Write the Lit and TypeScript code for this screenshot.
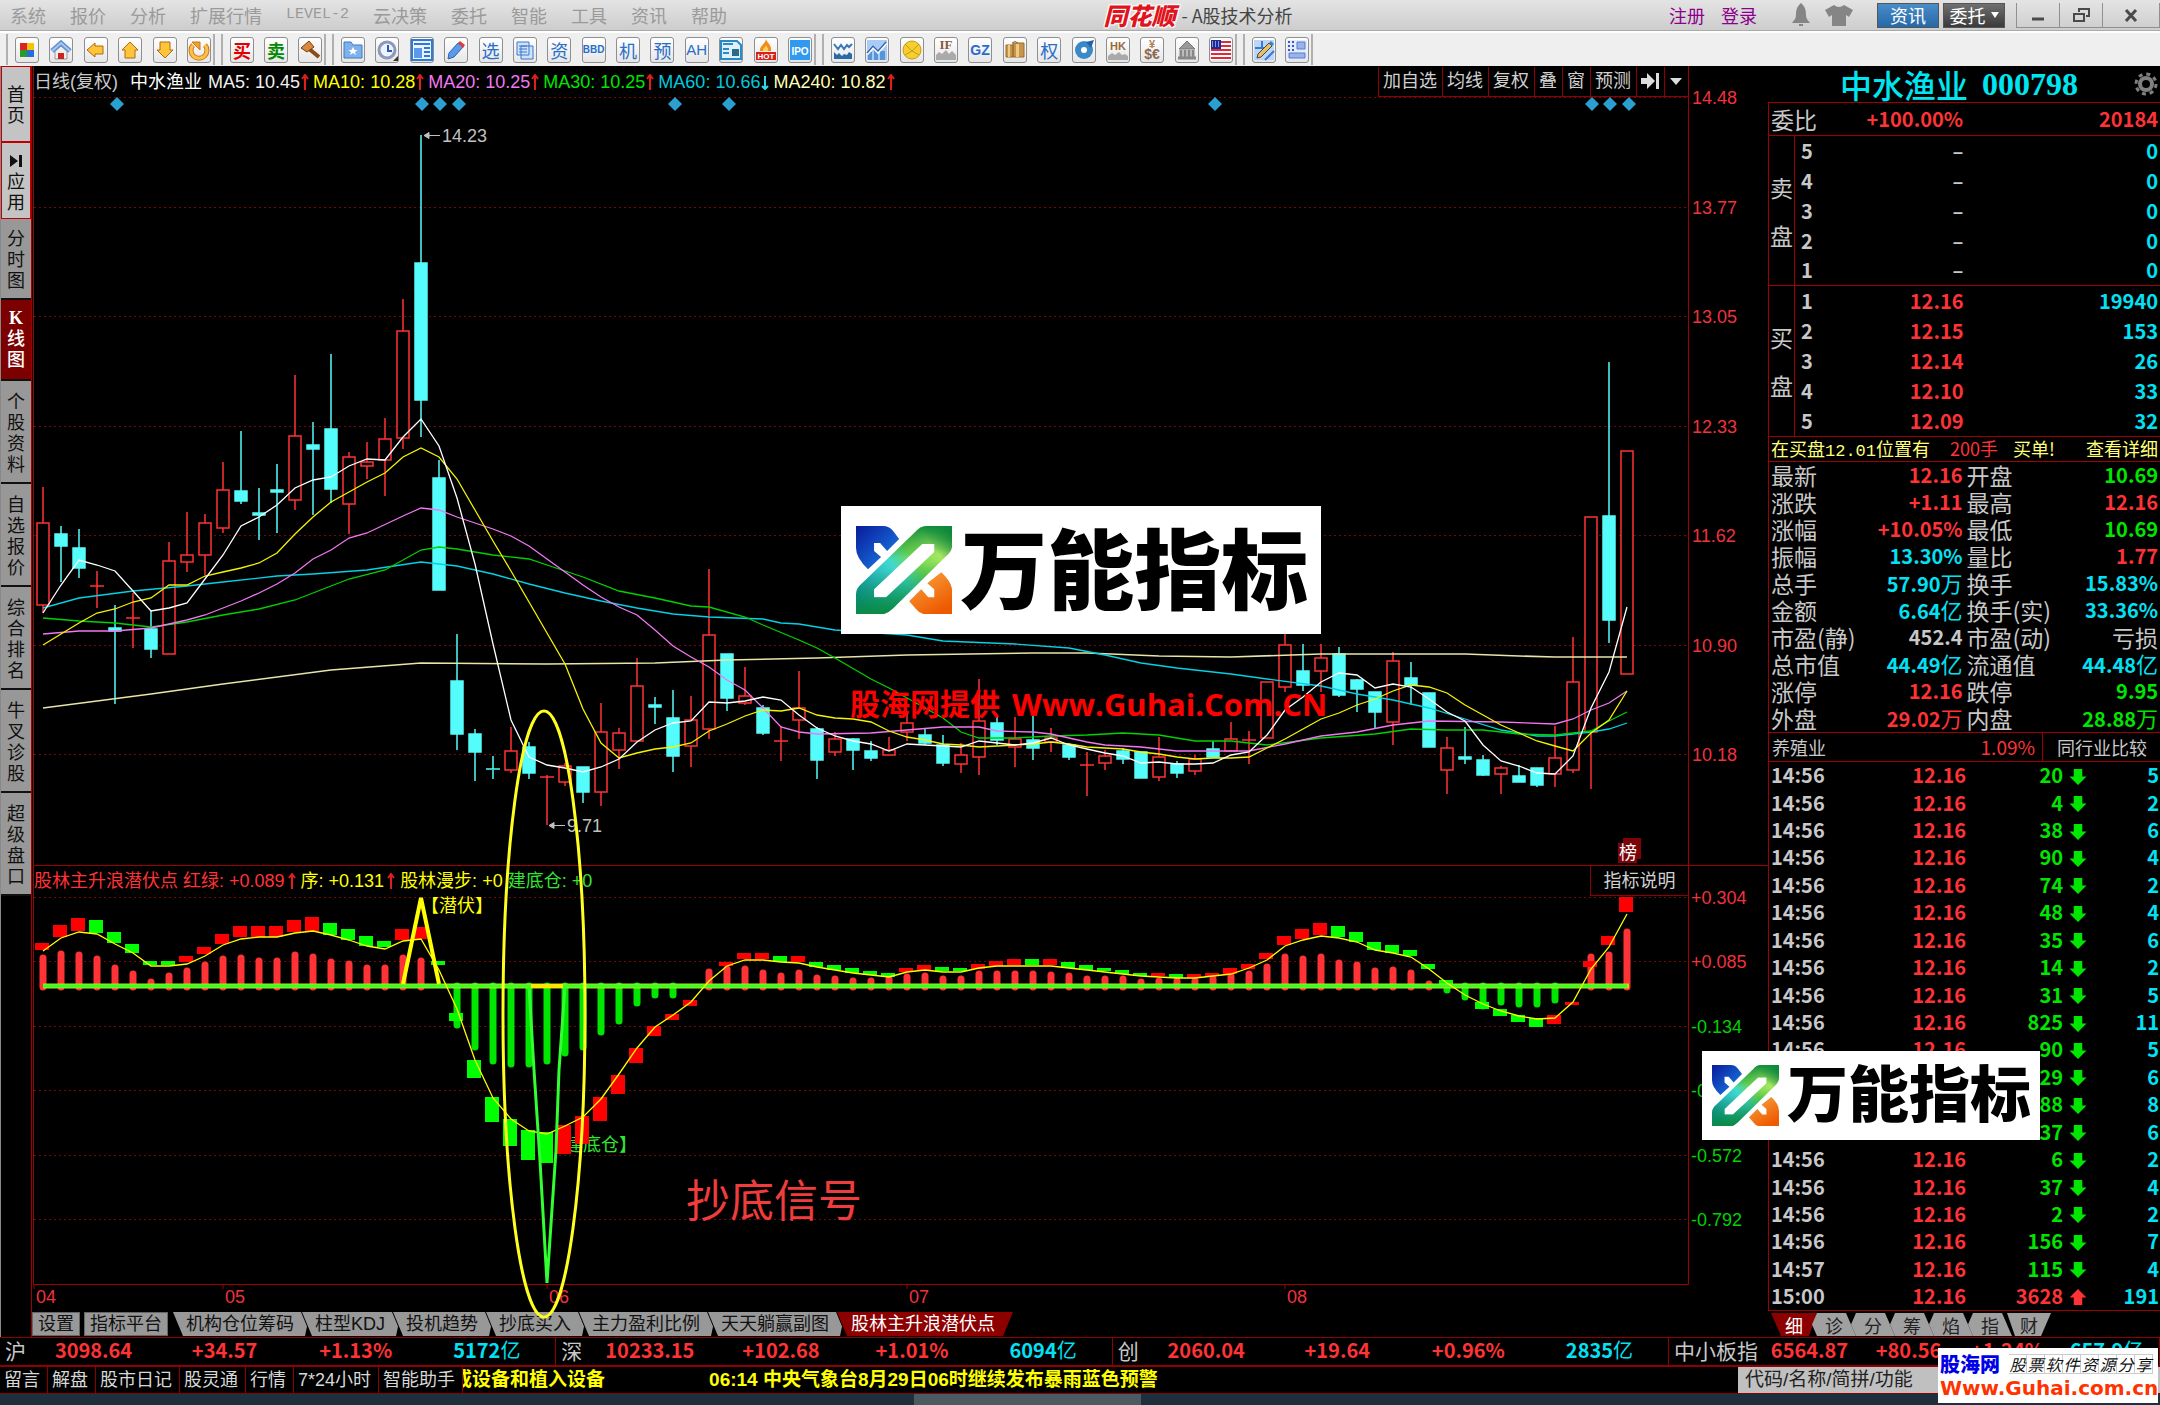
import { LitElement, html, svg, css } from "lit";
import { customElement } from "lit/decorators.js";
import { classMap } from "lit/directives/class-map.js";

type Point = [number, number];
// [direction, high, body top, body bottom, low]; "r" rises, "c" falls
type Candle = ["r" | "c", number, number, number, number];

const STEP = 18;
const FIRST_X = 43;
const xAt = (i: number) => FIRST_X + i * STEP;
const path = (pts: Point[]) => pts.map(([i, y]) => `${xAt(i)},${y}`).join(" ");
const dense = (ys: number[]): Point[] => ys.map((y, i) => [i, y]);

const CANDLES: Candle[] = [
  ["r", 487, 523, 605, 613], ["c", 526, 534, 546, 582], ["c", 529, 548, 568, 578], ["r", 571, 586, 586, 608],
  ["c", 605, 628, 631, 704], ["r", 593, 618, 618, 648], ["c", 610, 629, 649, 658], ["r", 542, 561, 654, 654],
  ["r", 512, 555, 562, 572], ["r", 514, 523, 555, 575], ["r", 462, 490, 528, 533], ["c", 431, 491, 501, 504],
  ["c", 488, 513, 515, 540], ["c", 464, 490, 492, 533], ["r", 375, 436, 500, 510], ["c", 422, 445, 449, 515],
  ["c", 354, 429, 489, 503], ["r", 452, 457, 504, 534], ["r", 442, 462, 466, 479], ["r", 418, 439, 460, 496],
  ["r", 299, 331, 438, 449], ["c", 135, 263, 400, 437], ["c", 460, 478, 590, 590], ["c", 634, 681, 734, 750],
  ["c", 729, 734, 752, 781], ["c", 756, 769, 770, 779], ["r", 727, 751, 770, 773], ["c", 742, 747, 773, 779],
  ["r", 775, 777, 777, 825], ["r", 763, 766, 782, 786], ["c", 767, 767, 792, 803], ["r", 703, 732, 792, 806],
  ["r", 728, 733, 750, 769], ["r", 658, 686, 741, 741], ["c", 697, 705, 707, 724], ["c", 690, 718, 756, 772],
  ["r", 696, 720, 746, 767], ["r", 569, 635, 729, 739], ["c", 654, 654, 698, 711], ["r", 667, 696, 703, 705],
  ["c", 705, 708, 733, 735], ["r", 726, 741, 741, 761], ["r", 671, 708, 720, 739], ["c", 727, 729, 760, 779],
  ["r", 732, 739, 752, 756], ["c", 738, 739, 750, 770], ["c", 741, 751, 758, 761], ["r", 737, 750, 755, 755],
  ["r", 713, 723, 732, 741], ["c", 729, 735, 743, 745], ["c", 735, 745, 763, 766], ["r", 743, 755, 764, 773],
  ["r", 679, 721, 757, 775], ["c", 717, 723, 740, 745], ["r", 717, 739, 747, 767], ["c", 713, 740, 748, 760],
  ["r", 728, 738, 742, 752], ["c", 743, 745, 757, 760], ["r", 752, 765, 765, 796], ["r", 750, 756, 763, 770],
  ["c", 748, 751, 759, 764], ["c", 752, 752, 778, 778], ["r", 737, 757, 777, 781], ["c", 761, 764, 773, 778],
  ["r", 755, 759, 771, 775], ["c", 741, 749, 757, 758], ["r", 722, 739, 751, 751], ["r", 731, 740, 740, 764],
  ["r", 682, 682, 738, 738], ["r", 625, 645, 687, 692], ["c", 644, 671, 685, 691], ["r", 644, 658, 671, 692],
  ["c", 647, 654, 695, 697], ["c", 679, 680, 689, 712], ["c", 692, 692, 712, 728], ["r", 652, 661, 722, 745],
  ["c", 662, 678, 685, 705], ["c", 693, 693, 747, 747], ["r", 737, 748, 770, 794], ["c", 727, 757, 759, 764],
  ["c", 755, 760, 775, 776], ["r", 766, 768, 774, 794], ["c", 765, 776, 782, 782], ["c", 768, 768, 785, 787],
  ["r", 726, 758, 774, 787], ["r", 637, 682, 770, 773], ["r", 517, 517, 732, 789], ["c", 362, 516, 620, 643],
  ["r", 451, 451, 674, 674],
];

const MA5 = dense([
  613, 585, 560, 565, 571, 591, 611, 608, 603, 579, 555, 526, 517, 505, 488, 480, 477, 466, 459, 460, 437, 419,
  446, 498, 564, 644, 720, 757, 765, 768, 772, 767, 759, 742, 730, 723, 721, 702, 703, 701, 697, 700, 715, 728,
  736, 741, 744, 751, 744, 745, 746, 747, 741, 743, 745, 743, 738, 745, 749, 753, 756, 763, 762, 764, 764, 763,
  755, 752, 735, 710, 697, 682, 673, 675, 688, 684, 687, 699, 712, 721, 745, 761, 766, 773, 774, 756, 708, 672, 607,
]);
const MA10 = dense([
  645, 634, 623, 613, 609, 602, 598, 585, 585, 576, 572, 568, 563, 553, 534, 517, 502, 492, 482, 473, 457, 448,
  457, 479, 510, 541, 571, 602, 633, 664, 709, 743, 758, 753, 749, 747, 743, 731, 724, 716, 710, 711, 708, 715,
  718, 719, 722, 731, 737, 740, 744, 745, 747, 746, 745, 744, 742, 744, 747, 748, 749, 752, 754, 757, 759, 758,
  758, 757, 748, 739, 729, 719, 713, 705, 699, 691, 685, 687, 693, 705, 715, 725, 733, 741, 746, 751, 733, 720, 691,
]);
const MA20: Point[] = [
  [0, 634], [2, 631], [4, 631], [6, 628], [8, 620], [9, 615], [10, 608], [11, 601], [12, 593], [13, 584], [14, 573],
  [15, 559], [16, 550], [17, 538], [18, 533], [20, 516], [21, 508], [22, 510], [23, 517], [25, 529], [26, 536],
  [27, 546], [28, 559], [30, 585], [31, 597], [32, 607], [33, 615], [34, 630], [35, 646], [36, 657], [37, 667],
  [38, 680], [39, 690], [40, 708], [41, 727], [42, 732], [43, 734], [46, 733], [48, 730], [50, 727], [52, 727],
  [53, 731], [55, 732], [56, 734], [58, 742], [59, 745], [61, 747], [63, 751], [67, 751], [69, 744], [71, 736],
  [73, 732], [75, 725], [77, 721], [81, 722], [84, 724], [85, 719], [86, 710], [87, 703], [88, 691],
];
const MA30: Point[] = [
  [0, 618], [2, 621], [4, 623], [6, 627], [8, 622], [10, 615], [12, 609], [14, 600], [16, 586], [17, 579], [19, 570],
  [21, 550], [22, 547], [23, 549], [25, 555], [27, 559], [28, 565], [30, 577], [32, 591], [34, 598], [36, 606],
  [37, 607], [39, 617], [40, 625], [42, 640], [43, 648], [44, 658], [46, 679], [47, 688], [48, 698], [50, 718],
  [51, 732], [52, 738], [54, 738], [56, 736], [58, 735], [60, 733], [62, 735], [64, 741], [66, 741], [68, 745],
  [71, 738], [74, 734], [76, 729], [78, 730], [80, 730], [82, 734], [84, 735], [86, 731], [87, 721], [88, 712],
];
const MA60: Point[] = [
  [0, 608], [2, 598], [5, 591], [8, 586], [10, 582], [13, 576], [15, 574], [18, 570], [21, 562], [23, 566], [25, 574],
  [27, 584], [29, 593], [31, 601], [33, 608], [35, 614], [37, 617], [40, 619], [41, 623], [42, 624], [44, 630],
  [48, 635], [50, 641], [54, 644], [57, 648], [59, 655], [61, 663], [63, 668], [66, 674], [68, 679], [71, 686],
  [73, 694], [75, 700], [77, 708], [79, 719], [81, 730], [83, 736], [84, 736], [86, 732], [87, 729], [88, 723],
];
const MA240: Point[] = [
  [0, 708], [6, 694], [10, 684], [16, 670], [21, 663], [28, 664], [34, 663], [38, 660], [43, 658], [48, 655],
  [55, 653], [58, 653], [62, 656], [66, 657], [71, 654], [79, 654], [82, 656], [84, 657], [88, 657],
];

// End of each momentum bar, drawn from the zero line; 0 means no bar.
const BARS = [
  955, 951, 952, 956, 965, 971, 979, 973, 968, 962, 956, 955, 958, 958, 952, 954, 959, 961, 965, 965, 955, 958,
  0, 1028, 1050, 1064, 1067, 1067, 1064, 1056, 1050, 1035, 1024, 1006, 998, 998, 0, 969, 966, 966, 970, 973, 970,
  975, 976, 978, 978, 976, 974, 973, 976, 976, 971, 971, 971, 971, 972, 973, 976, 976, 976, 979, 978, 978, 978,
  976, 973, 971, 964, 954, 956, 954, 960, 962, 968, 967, 970, 981, 993, 1000, 1009, 1005, 1007, 1007, 1003, 0,
  954, 952, 929,
];
type Square = [number, "R" | "G", number, number];
const SQUARES: Square[] = [
  [0, "R", 943, 950], [1, "R", 925, 937], [2, "R", 918, 931], [3, "G", 920, 933], [4, "G", 932, 943],
  [5, "G", 944, 953], [6, "G", 961, 965], [7, "G", 961, 965], [8, "R", 956, 962], [9, "R", 947, 954],
  [10, "R", 934, 944], [11, "R", 926, 937], [12, "R", 926, 937], [13, "R", 926, 937], [14, "R", 920, 932],
  [15, "R", 917, 931], [16, "G", 923, 935], [17, "G", 929, 940], [18, "G", 936, 946], [19, "G", 941, 947],
  [20, "R", 929, 940], [21, "R", 927, 939], [22, "G", 961, 965], [23, "G", 1013, 1021], [24, "G", 1060, 1078],
  [25, "G", 1097, 1122], [26, "G", 1119, 1146], [27, "G", 1130, 1160], [28, "G", 1132, 1163],
  [29, "R", 1125, 1154], [30, "R", 1116, 1144], [31, "R", 1097, 1121], [32, "R", 1075, 1094],
  [33, "R", 1048, 1063], [34, "R", 1026, 1036], [35, "R", 1014, 1020], [36, "R", 1000, 1006],
  [38, "R", 962, 966], [39, "R", 953, 959], [40, "R", 953, 959], [41, "G", 956, 962], [42, "R", 956, 962],
  [43, "G", 962, 967], [44, "G", 965, 970], [45, "G", 968, 973], [46, "G", 971, 975], [47, "G", 973, 977],
  [48, "R", 968, 972], [49, "R", 965, 970], [50, "G", 967, 971], [51, "G", 968, 971], [52, "R", 964, 969],
  [53, "R", 961, 966], [54, "R", 959, 965], [55, "G", 959, 965], [56, "R", 959, 965], [57, "G", 962, 968],
  [58, "G", 965, 970], [59, "G", 968, 971], [60, "G", 970, 974], [61, "G", 973, 976], [62, "R", 973, 976],
  [63, "G", 974, 978], [64, "R", 974, 978], [65, "R", 973, 976], [66, "R", 968, 974], [67, "R", 964, 969],
  [68, "R", 953, 959], [69, "R", 936, 945], [70, "R", 929, 939], [71, "R", 923, 935], [72, "G", 926, 937],
  [73, "G", 932, 942], [74, "G", 942, 950], [75, "G", 945, 953], [76, "G", 950, 956], [77, "G", 964, 969],
  [78, "G", 980, 984], [80, "G", 1002, 1009], [81, "G", 1009, 1016], [82, "G", 1015, 1022],
  [83, "G", 1018, 1027], [84, "R", 1015, 1024], [85, "R", 1002, 1005], [86, "R", 961, 967],
  [87, "R", 936, 945], [88, "R", 897, 912],
];
const ORDER_LINE = dense([
  951, 938, 932, 934, 944, 953, 966, 966, 964, 956, 945, 939, 937, 937, 933, 931, 935, 940, 946, 949, 941, 939,
  970, 1009, 1060, 1098, 1119, 1131, 1134, 1126, 1117, 1099, 1074, 1048, 1027, 1015, 1002, 981, 966, 960, 960,
  962, 963, 967, 970, 973, 975, 977, 972, 970, 972, 972, 968, 966, 966, 966, 966, 968, 970, 972, 974, 976, 977,
  978, 978, 976, 974, 968, 960, 946, 940, 936, 938, 942, 950, 953, 957, 969, 983, 995, 1004, 1011, 1016, 1019,
  1018, 1002, 969, 947, 914,
]);

@customElement("candle-chart")
export class CandleChart extends LitElement {
  static styles = css`
    :host { display: block; }
    .plot { display: block; width: 100%; height: auto; overflow: visible; }
    .grid { stroke: #740808; stroke-width: 1; stroke-dasharray: 2 3; }
    .frame { stroke: #a00000; stroke-width: 1; fill: none; }
    .axis { font: 18px "Liberation Sans", sans-serif; fill: #f0323c; }
    .rise { stroke: #ff3236; fill: #000; }
    .fall { stroke: #54fcfc; fill: #54fcfc; }
    .wick { fill: none; stroke-width: 1.5; }
    .body { stroke-width: 1.5; }
    .line { fill: none; stroke-width: 1.3; }
    .ma5 { stroke: #fff; }
    .ma10 { stroke: #f4f400; }
    .ma20 { stroke: #f078f0; }
    .ma30 { stroke: #00d200; }
    .ma60 { stroke: #02d2e4; }
    .ma240 { stroke: #e6e6a8; stroke-width: 1.6; }
    .note { font: 18px "Liberation Sans", sans-serif; fill: #c0c0c0; }
    .arrow { stroke: #c0c0c0; fill: #c0c0c0; }
    .diamond { fill: #2a9fd0; }
    .badge { fill: #7a0408; }
    .badge-text { font: 18px "Noto Sans CJK SC", sans-serif; fill: #fff; }
  `;

  private candle([dir, high, top, bottom, low]: Candle, i: number) {
    const x = xAt(i);
    const kind = dir === "r" ? "rise" : "fall";
    const flat = bottom - top < 2;
    return svg`<g class=${kind}>
      <path class="wick" d="M${x} ${high}V${top}M${x} ${bottom}V${low}"></path>
      ${flat
        ? svg`<path class="wick" d="M${x - 7} ${top}H${x + 7}"></path>`
        : svg`<rect class="body" x=${x - 6} y=${top} width="12" height=${bottom - top}></rect>`}
    </g>`;
  }

  render() {
    const prices = ["14.48", "13.77", "13.05", "12.33", "11.62", "10.90", "10.18"];
    const rows = [97, 207, 316, 426, 535, 645, 754];
    const marks = [117, 422, 440, 459, 675, 729, 1215, 1592, 1610, 1629];
    return html`<svg class="plot" viewBox="32 97 1736 769" role="img" aria-label="日线 K线图">
      ${rows.map((y) => svg`<line class="grid" x1="34" x2="1688" y1=${y + 0.5} y2=${y + 0.5}></line>`)}
      <path class="frame" d="M33.5 66V866M1688.5 66V866M33 865.5H1768"></path>
      ${rows.map((y, i) => svg`<text class="axis" x="1692" y=${y + 7}>${prices[i]}</text>`)}
      ${marks.map((x) => svg`<path class="diamond" d="M${x} 97l7 7l-7 7l-7-7z"></path>`)}
      ${CANDLES.map((c, i) => this.candle(c, i))}
      <polyline class="line ma240" points=${path(MA240)}></polyline>
      <polyline class="line ma60" points=${path(MA60)}></polyline>
      <polyline class="line ma30" points=${path(MA30)}></polyline>
      <polyline class="line ma20" points=${path(MA20)}></polyline>
      <polyline class="line ma10" points=${path(MA10)}></polyline>
      <polyline class="line ma5" points=${path(MA5)}></polyline>
      <path class="arrow" d="M440 135.500H424l5-3v6l-5-3"></path>
      <text class="note" x="442" y="142">14.23</text>
      <path class="arrow" d="M565 825.500H549l5-3v6l-5-3"></path>
      <text class="note" x="567" y="832">9.71</text>
      <path class="badge" d="M1618 843h5v-5h18v21h-4v4h-19z"></path>
      <text class="badge-text" x="1619" y="859">榜</text>
    </svg>`;
  }
}

@customElement("indicator-chart")
export class IndicatorChart extends LitElement {
  static styles = css`
    :host { display: block; }
    .plot { display: block; width: 100%; height: auto; overflow: visible; }
    .grid { stroke: #740808; stroke-width: 1; stroke-dasharray: 2 3; }
    .frame { stroke: #a00000; stroke-width: 1; fill: none; }
    .axis { font: 18px "Liberation Sans", sans-serif; }
    .up { fill: #f0323c; }
    .down { fill: #00d200; }
    .bar { stroke-width: 7; stroke-linecap: round; }
    .bar-up { stroke: #ff3236; }
    .bar-down { stroke: #00e600; }
    .R { fill: #ff0000; }
    .G { fill: #00ff00; }
    .order { fill: none; stroke: #ffff00; stroke-width: 1.3; }
    .peak { fill: none; stroke: #ffff00; stroke-width: 4; stroke-linejoin: bevel; }
    .zero { stroke: #b4e600; stroke-width: 5; }
    .zero-core { stroke: #32ff32; stroke-width: 3; }
    .zero-hot { stroke: #ffe600; stroke-width: 4; }
    .spike { fill: none; stroke: #32ff32; stroke-width: 3; stroke-linejoin: bevel; }
    .tag { font: 18px "Noto Sans CJK SC", sans-serif; }
    .tag-yellow { fill: #ffff00; }
    .tag-green { fill: #32e632; }
    .remark { font: 44px "Noto Sans CJK SC", sans-serif; fill: #f03c3c; }
  `;

  render() {
    const rows = [897, 961, 1026, 1090, 1155, 1219];
    const values = ["+0.304", "+0.085", "-0.134", "-0.353", "-0.572", "-0.792"];
    const months: [string, number][] = [["04", 34], ["05", 223], ["06", 547], ["07", 907], ["08", 1285]];
    return html`<svg class="plot" viewBox="32 896 1736 416" role="img" aria-label="股林主升浪潜伏点">
      ${rows.map((y) => svg`<line class="grid" x1="34" x2="1688" y1=${y + 0.5} y2=${y + 0.5}></line>`)}
      <path class="frame" d="M33.5 866V1284.500H1688.500V866"></path>
      ${rows.map((y, i) => svg`<text class=${i < 2 ? "axis up" : "axis down"} x="1691" y=${y + 7}>${values[i]}</text>`)}
      ${months.map(([m, x]) => svg`<path class="frame" d="M${x} 1284v5"></path>
        <text class="axis up" x=${x + 2} y="1303">${m}</text>`)}
      <text class="tag tag-yellow" x="421" y="912">【潜伏】</text>
      <text class="tag tag-green" x="547" y="1151">【建底仓】</text>
      <text class="remark" x="686" y="1217">抄底信号</text>
      ${BARS.map((y, i) => y === 0 ? "" : y < 985
        ? svg`<path class="bar bar-up" d="M${xAt(i)} ${y + 3}V987"></path>`
        : svg`<path class="bar bar-down" d="M${xAt(i)} 986V${y - 3}"></path>`)}
      ${SQUARES.map(([i, c, top, bottom]) =>
        svg`<rect class=${c} x=${xAt(i) - 8} y=${top} width="14" height=${bottom - top}></rect>`)}
      <path class="zero" d="M${xAt(0)} 986H${xAt(88) + 2}"></path>
      <path class="zero-core" d="M${xAt(0)} 986H${xAt(88)}"></path>
      <path class="zero-hot" d="M531 986H563"></path>
      <polyline class="order" points=${path(ORDER_LINE)}></polyline>
      <path class="peak" d="M403 984L421 898L439 984"></path>
      <path class="spike" d="M529 986L534 1070L540 1161L547 1283L556 1150L559 1070L565 986"></path>
    </svg>`;
  }
}

@customElement("brand-stamp")
export class BrandStamp extends LitElement {
  static styles = css`
    :host { display: flex; align-items: center; background: #fff; box-sizing: border-box; padding: 0 12px 0 15px; }
    .mark { height: 69%; width: auto; flex: none; }
    .name { flex: none; margin-left: 8px; padding-bottom: 10px; color: #000; font-family: "Noto Sans CJK SC", sans-serif; font-weight: 900; line-height: 1; white-space: nowrap; }
  `;
  render() {
    return html`<svg class="mark" viewBox="0 0 96 88" aria-hidden="true">
        <defs>
          <linearGradient id="blue" x1="0" y1="0" x2="1" y2="1"><stop offset="0" stop-color="#0a1a9a"></stop><stop offset="1" stop-color="#1a86ee"></stop></linearGradient>
          <linearGradient id="orange" x1="0" y1="0" x2="0.6" y2="1"><stop offset="0" stop-color="#f9a844"></stop><stop offset="1" stop-color="#ee5a00"></stop></linearGradient>
          <linearGradient id="teal" x1="0" y1="0.8" x2="1" y2="0.1"><stop offset="0" stop-color="#0a8f9f"></stop><stop offset="0.42" stop-color="#3fd9d0"></stop><stop offset="0.6" stop-color="#6fd650"></stop><stop offset="0.8" stop-color="#a6e860"></stop><stop offset="1" stop-color="#16863a"></stop></linearGradient>
          <linearGradient id="low" x1="0.3" y1="0.5" x2="0.4" y2="1"><stop offset="0" stop-color="#0a8a3a" stop-opacity="0"></stop><stop offset="1" stop-color="#0a8a3a"></stop></linearGradient>
          <linearGradient id="high" x1="0.6" y1="0.5" x2="0.55" y2="0"><stop offset="0.3" stop-color="#0a8a3a" stop-opacity="0"></stop><stop offset="1" stop-color="#0a8a3a"></stop></linearGradient>
        </defs>
        <path fill="url(#blue)" d="M0 0H27Q33 0 37 5L43 13L31 25L24 17H18V25L25 31L12 43Q0 32 0 22z"></path>
        <path fill="url(#orange)" d="M96 88H70Q64 88 60 83L53 75L65 63L72 71H78V63L71 57L85 46Q96 56 96 66z"></path>
        ${["teal", "low", "high"].map((g) => svg`<path fill="url(#${g})" fill-rule="evenodd" d="M96 0H70Q64 0 59 6L6 57Q0 62 0 68V88H25Q31 88 37 82L90 30Q96 25 96 18zM78 18V26L30 71H18V63L66 18z"></path>`)}
      </svg><span class="name">万能指标</span>`;
  }
}

const frame = (body: unknown) => svg`${body}`;
const ICONS: Record<string, unknown> = {
  grid: frame(svg`<path fill="#d22" d="M4 4h7v7H4z"/><path fill="#f5c400" d="M11 4h7v7h-7z"/><path fill="#2a9a2a" d="M4 11h7v7H4z"/><path fill="#2a6ae0" d="M11 11h7v7h-7z"/>`),
  home: frame(svg`<path fill="#eee" stroke="#999" d="M5 12v8h12v-8l-6-5z"/><path fill="#c22" d="M8 14h6v6H8z"/><path fill="none" stroke="#5f8fd0" stroke-width="5" d="M2 12l9-8 9 8"/><path fill="none" stroke="#a9c8f0" stroke-width="2" d="M2 12l9-8 9 8"/>`),
  left: frame(svg`<path fill="#ffc53a" stroke="#b06a10" d="M2 11l8-7v3h8v8h-8v3z"/>`),
  up: frame(svg`<path fill="#ffc53a" stroke="#b06a10" d="M11 3l8 8h-3v8H6v-8H3z"/>`),
  down: frame(svg`<path fill="#ffc53a" stroke="#b06a10" d="M11 19l8-8h-3V3H6v8H3z"/>`),
  refresh: frame(svg`<path fill="none" stroke="#c87a1a" stroke-width="5" d="M5 6a8 8 0 1 0 12 0"/><path fill="none" stroke="#ffc04a" stroke-width="3" d="M5 6a8 8 0 1 0 12 0"/><path fill="#f0a030" stroke="#c87a1a" d="M4 3h8v8z"/>`),
  hammer: frame(svg`<path stroke="#8a4a1a" stroke-width="4" d="M9 9l11 9"/><path fill="#d88a3a" stroke="#7a3a10" d="M2 9l8-7 5 6-7 5z"/>`),
  folder: frame(svg`<path fill="#7fb2ea" stroke="#3a78c8" d="M2 3h7l2 3h9v13H2z"/><path fill="#fff" d="M11 8l1.500 3h3l-2.500 2 1 3-3-2-3 2 1-3-2.500-2h3z"/>`),
  clock: frame(svg`<circle cx="11" cy="11" r="8" fill="#eef4ff" stroke="#8a9ab8" stroke-width="3"/><path fill="none" stroke="#2a5ac0" stroke-width="2" d="M12 6v6h4"/><path fill="#333" d="M22 17v5h-5z"/>`),
  news: frame(svg`<path fill="#eaf3ff" stroke="#2f7ad8" stroke-width="2" d="M1 1h20v20H1z"/><path stroke="#2f7ad8" stroke-width="2" d="M3 5h16M13 9h6M13 13h6M13 17h6"/><path fill="#5a9ae8" d="M3 9h8v10H3z"/>`),
  pencil: frame(svg`<path fill="#5a9ae8" stroke="#2a62b8" d="M4 14L13 4l5 4L9 18l-6 2z"/><path fill="#e03a3a" d="M13 4l2-2 5 4-2 3z"/>`),
  docs: frame(svg`<path fill="#cfe2fa" stroke="#3a78c8" d="M7 7h12v13H7zM3 3h12v13H3z"/><path stroke="#3a78c8" d="M5 7h8M5 10h8M5 13h8"/>`),
  page: frame(svg`<path fill="#dff0fb" stroke="#2a8ac8" stroke-width="2" d="M1 2h16l4 4v14H1z"/><path stroke="#2a8ac8" stroke-width="2" d="M3 5h10M3 10h6M3 14h6"/><path fill="#2a6a8a" d="M12 10h7v7h-7z"/>`),
  hot: frame(svg`<path fill="#f58a1e" d="M11 0c1 4 6 6 5 12H5c-1-5 5-6 6-12z"/><path fill="#ffd24a" d="M11 6c1 3 3 3 2 6H8c0-3 2-3 3-6z"/><path fill="#d8201c" d="M1 13h20v8H1z"/><text x="11" y="20" text-anchor="middle" font-family="Liberation Sans" font-weight="700" font-size="8" fill="#fff">HOT</text>`),
  ipo: frame(svg`<path fill="#2f9af0" d="M1 1h20v20H1z"/><text x="11" y="16" text-anchor="middle" font-family="Liberation Sans" font-weight="700" font-size="10" fill="#fff">IPO</text>`),
  wave: frame(svg`<path fill="none" stroke="#3a78b8" stroke-width="2" d="M2 5l4 5 3-4 3 4 3-4 2 2 3-3"/><path fill="#2a6aa8" d="M2 13l3 3 2-2 3 3 2-2 3 1 2-3 3 2v5H2z"/>`),
  trend: frame(svg`<path fill="#a8ccf4" d="M1 1h20v20H1z"/><path fill="#5a94d8" d="M2 13h4v8H2zM8 11h4v10H8zM14 12h5v9h-5z"/><path fill="none" stroke="#fff" stroke-width="3" d="M1 15l6-7 5 5 8-9"/><path fill="none" stroke="#2f62b0" stroke-width="1.500" d="M1 14l6-7 5 5 8-9"/>`),
  ball: frame(svg`<circle cx="11" cy="11" r="9" fill="#f5cf30" stroke="#c89a10"/><path fill="none" stroke="#c89a10" d="M4 5q5 7 14 11M18 5q-5 7-14 11"/>`),
  futures: frame(svg`<path fill="#aaa" d="M1 21v-5l3-3 3 2 4-4 3 4 3-3 4 4v5z"/><text x="11" y="10" text-anchor="middle" font-family="Liberation Serif" font-weight="700" font-size="13" fill="#8a5a3a">IF</text>`),
  gz: frame(svg`<text x="11" y="16" text-anchor="middle" font-family="Liberation Sans" font-weight="700" font-size="14" fill="#2a6ad0">GZ</text>`),
  chest: frame(svg`<path fill="#c8964a" stroke="#9a6a2a" d="M2 6h7v12H2zM9 4h11v14H9z"/><path fill="#eccb8a" d="M4 6h2v12H4zM12 5h3v13h-3z"/><path fill="none" stroke="#8a6a3a" d="M8 4q3-3 6 0"/>`),
  disc: frame(svg`<circle cx="11" cy="11" r="9" fill="#3a8ac8"/><path fill="#1f62a8" d="M13 3l8-2-3 8z"/><circle cx="11" cy="11" r="3" fill="#fff"/>`),
  hk: frame(svg`<path fill="#aaa" d="M1 21v-4l4-3 3 2 4-3 3 3 3-1 3 2v4z"/><text x="11" y="11" text-anchor="middle" font-family="Liberation Sans" font-weight="700" font-size="11" fill="#9a6a3a">HK</text>`),
  money: frame(svg`<text x="11" y="9" text-anchor="middle" font-family="Liberation Sans" font-weight="700" font-size="11" fill="#b08050">¥</text><text x="11" y="20" text-anchor="middle" font-family="Liberation Sans" font-weight="700" font-size="14" fill="#8a6a50">$€</text>`),
  bank: frame(svg`<path fill="#999" stroke="#777" d="M3 10l8-8 8 8z"/><path stroke="#888" stroke-width="3" d="M5 11v7M9 11v7M13 11v7M17 11v7M2 19h18"/>`),
  flag: frame(svg`<path fill="#fff" d="M1 1h20v20H1z"/><path stroke="#e02a3a" stroke-width="2" d="M1 3h20M1 7h20M1 11h20M1 15h20M1 19h20"/><path fill="#1a2a9a" d="M1 1h10v9H1z"/><path stroke="#fff" stroke-dasharray="1 2" d="M2 3h8M2 5h8M2 7h8"/>`),
  draw: frame(svg`<path fill="#bcd6f6" d="M1 1h20v20H1z"/><path fill="none" stroke="#3a78d8" stroke-width="2" d="M2 9h9M9 2v8M12 21l9-9"/><path fill="#e8c060" stroke="#444" d="M5 15L16 4l3 3L8 18l-4 1z"/><path fill="#2a8ad8" d="M16 4l2-2 3 3-2 2z"/>`),
  board: frame(svg`<path fill="#e4ecfb" d="M1 1h20v20H1z"/><path stroke="#3a5ac0" stroke-width="2" stroke-dasharray="2 2" d="M2 3h7M2 7h7M2 11h7"/><path fill="#9ab4e8" stroke="#5a7ad0" d="M11 3h8v7h-8zM3 14h16v5H3z"/>`),
};

type Tool = { icon?: string; text?: string; tone?: string; label: string };
const icon = (name: string, label: string): Tool => ({ icon: name, label });
const word = (text: string, tone = "blue"): Tool => ({ text, tone, label: text });
const TOOL_GROUPS: { size: string; tools: Tool[] }[] = [
  { size: "g6", tools: [icon("grid", "首页"), icon("home", "主页"), icon("left", "后退"), icon("up", "上翻"), icon("down", "下翻"), icon("refresh", "刷新")] },
  { size: "g3", tools: [word("买", "red"), word("卖", "green"), icon("hammer", "拍卖")] },
  { size: "g14", tools: [icon("folder", "自选"), icon("clock", "定时"), icon("news", "新闻"), icon("pencil", "画笔"), word("选"), icon("docs", "文档"), word("资"), word("BBD", "blue small"), word("机"), word("预"), word("AH", "blue mid"), icon("page", "公告"), icon("hot", "热点"), icon("ipo", "新股")] },
  { size: "g12", tools: [icon("wave", "波动"), icon("trend", "走势"), icon("ball", "商品"), icon("futures", "期货"), icon("gz", "国债"), icon("chest", "基金"), word("权"), icon("disc", "全球"), icon("hk", "港股"), icon("money", "外汇"), icon("bank", "银行"), icon("flag", "美股")] },
  { size: "g2", tools: [icon("draw", "画线"), icon("board", "面板")] },
];

@customElement("title-bar")
export class TitleBar extends LitElement {
  static styles = css`
    :host { display: block; font: 18px/24px "Noto Sans CJK SC", sans-serif; }
    .bar { display: flex; justify-content: space-between; align-items: center; height: 31px; box-sizing: border-box; background: linear-gradient(#e4e4e4, #cdcdcd); border-bottom: 1px solid #aaa; }
    .menu { display: flex; gap: 24px; padding-left: 10px; }
    .menu-item, .tool, .win, .pill { font: inherit; padding: 0; margin: 0; border: 0; background: none; color: inherit; white-space: nowrap; }
    .menu-item { color: #9a9a9a; }
    .latin { font: 15px/24px "Liberation Mono", monospace; }
    .center { display: flex; align-items: center; gap: 6px; color: #444; }
    .brand { font-size: 24px; font-weight: 900; font-style: italic; color: #e0141c; text-shadow: 0 0 2px #fff, 1px 1px 1px #fff, -1px -1px 1px #fff, 1px -1px 1px #fff, -1px 1px 1px #fff; }
    .right { display: flex; align-items: center; justify-content: flex-end; }
    .link { color: #8c008c; text-decoration: none; margin-right: 16px; }
    .glyph { width: 28px; height: 24px; fill: #858585; margin-left: 10px; }
    .bell { margin-left: 14px; }
    .pill { height: 25px; width: 62px; color: #fff; border: 1px solid #555; line-height: 22px; }
    .news { background: linear-gradient(#4a8cc8, #2668a8); margin-left: 24px; }
    .trade { background: linear-gradient(#707070, #3a3a3a); margin-left: 4px; display: flex; align-items: center; justify-content: center; gap: 5px; }
    .caret { width: 8px; height: 6px; fill: #fff; }
    .controls { display: flex; margin-left: 11px; border: 1px solid #909090; border-top: 0; height: 24px; }
    .win { width: 43px; border-right: 1px solid #909090; display: grid; place-items: center; }
    .win:last-child { border-right: 0; width: 56px; }
    .win-icon { width: 18px; height: 18px; fill: none; stroke: #4a4a4a; stroke-width: 2; }
    .tools { display: flex; align-items: center; height: 35px; box-sizing: border-box; border-top: 2px solid #fff; background: #efefef; padding-left: 6px; }
    .group { display: flex; align-items: center; justify-content: space-between; height: 31px; box-sizing: border-box; border-left: 2px solid #b0b0b0; border-right: 2px solid #b0b0b0; padding: 0 2px 0 7px; margin-right: 6px; }
    .g6 { width: 209px; }
    .g3 { width: 105px; }
    .g14 { width: 484px; }
    .g12 { width: 415px; }
    .g2 { width: 70px; }
    .tool { width: 24px; height: 26px; box-sizing: border-box; border: 1px solid #8f8f8f; border-radius: 3px; background: linear-gradient(#fff, #e6e6e6); display: grid; place-items: center; line-height: 22px; }
    .tool-icon { width: 22px; height: 22px; }
    .red { color: #e00000; font-weight: 700; }
    .green { color: #008a00; font-weight: 700; }
    .blue { color: #2a6ec8; }
    .small { font: 700 10px/22px "Liberation Sans", sans-serif; }
    .mid { font: 15px/22px "Liberation Sans", sans-serif; }
  `;
  render() {
    const menu = ["系统", "报价", "分析", "扩展行情", "LEVEL-2", "云决策", "委托", "智能", "工具", "资讯", "帮助"];
    return html`
      <header class="bar">
        <nav class="menu">${menu.map((m) => html`<button class=${classMap({ "menu-item": true, latin: m === "LEVEL-2" })}>${m}</button>`)}</nav>
        <div class="center"><span class="brand">同花顺</span><span>- A股技术分析</span></div>
        <div class="right">
          <a class="link" href="#register">注册</a><a class="link" href="#login">登录</a>
          <svg class="glyph bell" viewBox="0 0 28 24" aria-hidden="true"><path d="M14 0c3 3 5 5 5 12 0 4 2 5 4 8H5c2-3 4-4 4-8 0-7 2-9 5-12zM12 21h4v2h-4z"></path></svg>
          <svg class="glyph" viewBox="0 0 28 24" aria-hidden="true"><path d="M9 2q5 4 10 0l9 5-4 7-3-2v11H7V12l-3 2-4-7z"></path></svg>
          <button class="pill news">资讯</button>
          <button class="pill trade">委托<svg class="caret" viewBox="0 0 8 6" aria-hidden="true"><path d="M0 0h8L4 6z"></path></svg></button>
          <div class="controls">
            <button class="win" aria-label="最小化"><svg class="win-icon" viewBox="0 0 18 18"><path stroke-width="3" d="M3 13h12"></path></svg></button>
            <button class="win" aria-label="还原"><svg class="win-icon" viewBox="0 0 18 18"><path d="M7 6V3h10v7h-3M2 8h10v7H2z"></path></svg></button>
            <button class="win" aria-label="关闭"><svg class="win-icon" viewBox="0 0 18 18"><path stroke-width="3" d="M4 4l10 11M14 4L4 15"></path></svg></button>
          </div>
        </div>
      </header>
      <div class="tools" role="toolbar">
        ${TOOL_GROUPS.map((g) => html`<div class="group ${g.size}">
          ${g.tools.map((t) => html`<button class="tool ${t.tone ?? ""}" aria-label=${t.label}>
            ${t.icon ? html`<svg class="tool-icon" viewBox="0 0 22 22">${ICONS[t.icon]}</svg>` : t.text}
          </button>`)}
        </div>`)}
      </div>`;
  }
}

type Cell = [string, string];
const STATS: [string, Cell, string, Cell][] = [
  ["最新", ["12.16", "red"], "开盘", ["10.69", "green"]],
  ["涨跌", ["+1.11", "red"], "最高", ["12.16", "red"]],
  ["涨幅", ["+10.05%", "red"], "最低", ["10.69", "green"]],
  ["振幅", ["13.30%", "cyan"], "量比", ["1.77", "red"]],
  ["总手", ["57.90万", "cyan"], "换手", ["15.83%", "cyan"]],
  ["金额", ["6.64亿", "cyan"], "换手(实)", ["33.36%", "cyan"]],
  ["市盈(静)", ["452.4", "gray"], "市盈(动)", ["亏损", "gray"]],
  ["总市值", ["44.49亿", "cyan"], "流通值", ["44.48亿", "cyan"]],
  ["涨停", ["12.16", "red"], "跌停", ["9.95", "green"]],
  ["外盘", ["29.02万", "red"], "内盘", ["28.88万", "green"]],
];
const VOLUMES = [20, 4, 38, 90, 74, 48, 35, 14, 31, 825, 90, 29, 88, 37, 6, 37, 2, 156, 115, 3628];
const DEALS = [5, 2, 6, 4, 2, 4, 6, 2, 5, 11, 5, 6, 8, 6, 2, 4, 2, 7, 4, 191];
const TICKS = VOLUMES.map((v, i) => ({
  time: i < 18 ? "14:56" : i === 18 ? "14:57" : "15:00",
  volume: v,
  deals: DEALS[i],
  up: i === 19,
}));

// Splits a figure such as 57.90万 so that its unit takes the lighter weight.
const figure = (v: string) => {
  const m = v.match(/^([\d.+%-]+)([万亿])$/);
  return m ? html`${m[1]}<span class="unit">${m[2]}</span>` : v;
};

@customElement("quote-panel")
export class QuotePanel extends LitElement {
  static styles = css`
    :host { display: flex; flex-direction: column; min-width: 0; font: 23px/24px "Noto Sans CJK SC", sans-serif; color: #c8c8c8; }
    .head { display: flex; align-items: center; height: 36px; padding-left: 72px; color: #00e6f0; font-size: 32px; line-height: 34px; gap: 14px; }
    .name { font-weight: 500; flex: none; }
    .code { font-family: "Liberation Serif", serif; font-weight: 700; }
    .gear { width: 24px; height: 24px; margin-left: auto; margin-right: 2px; fill: none; stroke: #808080; }
    .panel { border-left: 1px solid #a00000; flex: 1; display: flex; flex-direction: column; }
    .ratio { display: flex; align-items: center; height: 32px; border-top: 1px solid #a00000; padding: 0 2px; }
    .ratio-pct { width: 146px; text-align: right; }
    .ratio-sum { margin-left: auto; }
    .num { font-size: 20px; font-weight: 700; white-space: nowrap; }
    .unit { font-weight: 400; font-size: 22px; }
    .red { color: #ff3236; }
    .green { color: #00e600; }
    .cyan { color: #02e2f4; }
    .gray { color: #c8c8c8; }
    .plain { font-weight: 400; font-size: 23px; }
    table { border-collapse: collapse; width: 100%; table-layout: fixed; }
    td, th { padding: 0; font-weight: 400; text-align: left; }
    .book tbody { border-top: 1px solid #a00000; }
    .book tr { height: 30px; }
    .side { width: 25px; border-right: 1px solid #a00000; text-align: center; line-height: 48px; }
    .level { width: 36px; padding-left: 6px; box-sizing: border-box; }
    .price { width: 133px; text-align: right; }
    .amount { text-align: right; padding-right: 2px; }
    .notice { display: flex; flex: none; height: 26px; border-top: 1px solid #a00000; border-bottom: 1px solid #a00000; box-sizing: border-box; padding: 0 2px; font-size: 18px; line-height: 22px; color: #ffff78; white-space: nowrap; }
    .mono { font: 17px/22px "Liberation Mono", monospace; }
    .lots { margin: 0 15px 0 20px; }
    .detail { margin-left: auto; color: inherit; text-decoration: none; }
    .stats tr { height: 27px; }
    .stats th { padding-left: 2px; white-space: nowrap; }
    .stats .right-label { padding-left: 2px; }
    .stats .value { text-align: right; padding-right: 2px; line-height: 20px; }
    .sector { display: flex; flex: none; align-items: center; height: 30px; box-sizing: border-box; border-top: 1px solid #a00000; border-bottom: 1px solid #a00000; font-size: 18px; padding-left: 3px; }
    .sector-pct { margin-left: auto; margin-right: 7px; font-size: 19px; }
    .peers { font: inherit; color: inherit; background: none; border: 0; border-left: 1px solid #a00000; height: 100%; width: 118px; padding: 0 0 0 4px; text-align: left; text-indent: 10px; }
    .ticks { border-bottom: 1px solid #a00000; flex: 1; display: grid; }
    .ticks-table { height: 100%; }
    .ticks tr { height: 27px; }
    .time { width: 90px; padding-left: 2px; }
    .tick-price { width: 105px; text-align: right; }
    .volume { text-align: right; }
    .way { width: 30px; text-align: center; line-height: 18px; }
    .way-icon { width: 18px; height: 17px; display: block; margin: 2px auto 0; fill: currentColor; }
    .deals { width: 66px; text-align: right; padding-right: 1px; }
    .tabs { display: flex; padding: 2px 0 0 3px; height: 24px; font-size: 18px; line-height: 22px; }
    .tab { font: inherit; border: 0; padding: 0; width: 44px; margin-right: -5px; background: #a0a0a0; color: #222; height: 23px; clip-path: polygon(0 50%, 5px 0, 34px 0, 100% 100%, 5px 100%); }
    .tab:last-child { clip-path: polygon(0 0, 100% 0, 34px 100%, 8px 100%); }
    .tab-on { background: #8c0000; color: #fff; width: 46px; clip-path: polygon(0 0, 100% 0, 38px 100%, 10px 100%); }
  `;

  private book(side: string, rows: [string, string, string, string][]) {
    return html`<tbody>${rows.map(([level, price, amount, tone], i) => html`<tr>
      ${i === 0 ? html`<th class="side" rowspan="5" scope="rowgroup">${side[0]}<br>${side[1]}</th>` : ""}
      <td class="level num">${level}</td><td class="price num ${tone}">${price}</td><td class="amount num cyan">${amount}</td>
    </tr>`)}</tbody>`;
  }

  render() {
    return html`
      <div class="head"><span class="name">中水渔业</span><span class="code">000798</span>
        <svg class="gear" viewBox="0 0 24 24" aria-label="设置"><circle cx="12" cy="12" r="6" stroke-width="4"></circle><circle cx="12" cy="12" r="10" stroke-width="3" stroke-dasharray="4 3.850"></circle></svg>
      </div>
      <div class="panel">
        <div class="ratio"><span>委比</span><span class="ratio-pct num red">+100.00%</span><span class="ratio-sum num red">20184</span></div>
        <table class="book">
          ${this.book("卖盘", ["5", "4", "3", "2", "1"].map((l) => [l, "–", "0", "gray"]))}
          ${this.book("买盘", [["1", "12.16", "19940", "red"], ["2", "12.15", "153", "red"], ["3", "12.14", "26", "red"], ["4", "12.10", "33", "red"], ["5", "12.09", "32", "red"]])}
        </table>
        <div class="notice"><span>在买盘<span class="mono">12.01</span>位置有</span><span class="lots red">200手</span><span>买单!</span><a class="detail" href="#detail">查看详细</a></div>
        <table class="stats">
          <tbody>${STATS.map(([a, [av, at], b, [bv, bt]]) => html`<tr>
            <th scope="row">${a}</th><td class="value num ${at}">${figure(av)}</td>
            <th class="right-label" scope="row">${b}</th><td class=${classMap({ value: true, num: true, [bt]: true, plain: bv === "亏损" })}>${figure(bv)}</td>
          </tr>`)}</tbody>
        </table>
        <div class="sector"><span>养殖业</span><span class="sector-pct red">1.09%</span><button class="peers">同行业比较</button></div>
        <div class="ticks"><table class="ticks-table"><tbody>${TICKS.map((t) => html`<tr>
          <td class="time num">${t.time}</td><td class="tick-price num red">12.16</td>
          <td class="volume num ${t.up ? "red" : "green"}">${t.volume}</td>
          <td class="way ${t.up ? "red" : "green"}"><svg class="way-icon" viewBox="0 0 16 16">${t.up
            ? svg`<path d="M8 0l8 8h-4v7H4V8H0z"></path>`
            : svg`<path d="M8 16l8-8h-4V1H4v7H0z"></path>`}</svg></td>
          <td class="deals num cyan">${t.deals}</td>
        </tr>`)}</tbody></table></div>
      </div>
      <div class="tabs">${["细", "诊", "分", "筹", "焰", "指", "财"].map((t, i) => html`<button class=${classMap({ tab: true, "tab-on": i === 0 })}>${t}</button>`)}</div>`;
  }
}

const AVERAGES: [string, string, string, boolean][] = [
  ["MA5:", "10.45", "white", true], ["MA10:", "10.28", "yellow", true], ["MA20:", "10.25", "pink", true],
  ["MA30:", "10.25", "green", true], ["MA60:", "10.66", "cyan", false], ["MA240:", "10.82", "cream", true],
];
const SIDE_TABS = ["首页", "⏭应用", "分时图", "K线图", "个股资料", "自选报价", "综合排名", "牛叉诊股", "超级盘口"];
const INDEXES: [string, string[]][] = [
  ["沪", ["3098.64", "+34.57", "+1.13%", "5172亿"]],
  ["深", ["10233.15", "+102.68", "+1.01%", "6094亿"]],
  ["创", ["2060.04", "+19.64", "+0.96%", "2835亿"]],
  ["中小板指", ["6564.87", "+80.56", "+1.24%", "657.9亿"]],
];

@customElement("app-root")
export class AppRoot extends LitElement {
  static styles = css`
    :host { display: flex; flex-direction: column; position: relative; min-height: 100vh; overflow: hidden; background: #000; color: #c8c8c8; font: 18px/24px "Liberation Sans", "Noto Sans CJK SC", sans-serif; }
    button { font: inherit; margin: 0; padding: 0; border: 0; background: none; color: inherit; white-space: nowrap; }
    .main { display: grid; grid-template-columns: 32px minmax(0, 1fr) 392px; }
    .side { display: flex; flex-direction: column; border-left: 1px solid #888; border-right: 1px solid #a00000; font: 18px/21px "Noto Sans CJK SC", sans-serif; }
    .side-tab { width: 30px; box-sizing: border-box; padding: 8px 6px; border-bottom: 2px solid #111; background: #989898; color: #111; white-space: normal; word-break: break-all; line-height: 21px; }
    .side-tall { padding: 9px 6px 8px; }
    .side-light { background: #c4c4c4; border: 1px solid #c00000; padding: 6px 5px; }
    .side-first { background: #c4c4c4; border: 1px solid #c00000; padding: 16px 5px; }
    .side-on { background: #7c0000; color: #fff; font-family: "Liberation Serif", "Noto Sans CJK SC", serif; font-weight: 500; }
    .side-k { font-weight: 700; }
    .skip { width: 14px; height: 12px; fill: #111; }
    .charts { position: relative; min-width: 0; }
    .legend { display: flex; align-items: center; height: 31px; padding-left: 2px; white-space: nowrap; }
    .period { margin-right: 12px; }
    .stock { margin-right: 6px; color: #fff; }
    .average { display: inline-flex; align-items: center; gap: 4px; }
    .trend { width: 13px; height: 16px; fill: none; stroke-width: 2; }
    .trend-up { stroke: #e01e1e; }
    .trend-down { stroke: #30d8e8; }
    .white { color: #f0f0f0; } .yellow { color: #ffff00; } .pink { color: #f078f0; } .green { color: #00e600; }
    .cyan { color: #02c8dc; } .cream { color: #ffffb4; } .red { color: #ff3236; } .lime { color: #32e632; }
    .actions { margin-left: auto; margin-right: 79px; display: flex; height: 30px; border: 1px solid #900000; border-top: 0; border-right: 0; box-sizing: border-box; }
    .action { padding: 0 5px 0 4px; border-right: 1px solid #900000; display: grid; place-items: center; color: #d0d0d0; }
    .end-icon { width: 18px; height: 18px; fill: #ddd; }
    .more-icon { width: 14px; height: 18px; fill: #ddd; }
    .legend2 { display: flex; align-items: center; height: 30px; padding: 0 79px 0 2px; white-space: nowrap; box-sizing: border-box; }
    .legend2-gap { margin-right: 5px; }
    .item { display: inline-flex; align-items: center; gap: 5px; margin-right: 5px; }
    .item .trend { margin-left: -3px; margin-right: -4px; }
    .explain { margin-left: auto; width: 99px; height: 30px; box-sizing: border-box; border: 1px solid #900000; border-top: 0; color: #d0d0d0; }
    .ring { position: absolute; inset: 0; width: 100%; pointer-events: none; fill: none; stroke: #ffff1e; stroke-width: 3; }
    .tabs { display: flex; height: 25px; line-height: 24px; }
    .plain-tab { background: #989898; color: #111; border: 1px solid #666; height: 24px; line-height: 22px; padding: 0 5px; margin-right: 4px; }
    .tab { height: 24px; padding: 0 14px 0 13px; margin-right: -6px; background: #989898; color: #111; clip-path: polygon(0 0, calc(100% - 7px) 0, calc(100% - 1px) 60%, calc(100% - 3px) 100%, 10px 100%); }
    .tab-first { margin-left: 1px; }
    .tab-on { background: #8c0000; color: #fff; padding: 0 18px 0 14px; clip-path: polygon(0 0, 100% 0, calc(100% - 10px) 100%, 10px 100%); }
    .indexes { display: grid; grid-template-columns: repeat(3, 1fr) 491px; height: 30px; box-sizing: border-box; border-top: 1px solid #900000; border-bottom: 2px solid #900000; line-height: 24px; white-space: nowrap; font-family: "Noto Sans CJK SC", sans-serif; }
    .index { display: grid; grid-template-columns: 28px repeat(4, 1fr); align-items: start; text-align: center; border-right: 1px solid #900000; padding-right: 3px; font-size: 20px; font-weight: 700; color: #ff3236; }
    .index-wide { grid-template-columns: 91px repeat(4, 1fr); }
    .index-name { font-weight: 400; color: #c8c8c8; text-align: left; padding-left: 5px; font-size: 21px; }
    .turnover { color: #02e2f4; }
    .thin { font-weight: 400; }
    .footer { display: flex; height: 27px; box-sizing: border-box; line-height: 26px; border-bottom: 1px solid #900000; white-space: nowrap; }
    .foot-link { padding: 0 7px 0 4px; border-right: 1px solid #900000; color: #d8d8d8; }
    .news { flex: 1; overflow: hidden; color: #ffff00; font-size: 19px; font-weight: 700; }
    .news-track { display: flex; gap: 104px; margin-left: -10px; }
    .search { width: 422px; box-sizing: border-box; border: 0; margin: 0; padding: 0 7px; background: #c0c0c0; color: #111; font: inherit; font-size: 19px; height: 26px; }
    .search::placeholder { color: #222; opacity: 1; }
    .taskbar { flex: 1 0 11px; background: #1d303b; display: flex; }
    .task { width: 227px; margin-left: 914px; background: #4c5a62; }
    .stamp-large { position: absolute; left: 841px; top: 506px; width: 480px; height: 128px; font-size: 87px; }
    .stamp-small { position: absolute; left: 1702px; top: 1051px; width: 338px; height: 89px; font-size: 61px; padding: 0 8px 0 10px; }
    .credit { position: absolute; left: 850px; top: 687px; font: 700 31px/34px "Open Sans", "Noto Sans CJK SC", sans-serif; color: #ff0000; white-space: nowrap; display: flex; gap: 12px; }
    .credit-cjk { font-size: 30px; }
    .source { position: absolute; right: 2px; bottom: 2px; width: 220px; height: 55px; box-sizing: border-box; background: #fff; padding: 3px 2px; }
    .source-top { display: flex; align-items: center; justify-content: space-between; height: 25px; padding-right: 3px; }
    .source-name { font: 900 20px/25px "Noto Sans CJK SC", sans-serif; color: #0000e6; }
    .source-tag { display: flex; }
    .source-char { width: 18px; box-sizing: border-box; border: 1px solid #ccc; border-left: 0; font: 16px/18px "Noto Sans CJK SC", sans-serif; color: #111; text-align: center; font-style: italic; }
    .source-url { display: block; font: 700 20px/24px "DejaVu Sans", sans-serif; color: #ff3200; text-decoration: none; white-space: nowrap; }
  `;

  private arrow(up: boolean) {
    return html`<svg class="trend ${up ? "trend-up" : "trend-down"}" viewBox="0 0 13 16" aria-hidden="true">
      ${up ? svg`<path d="M5 16V2M2 5l3-4 3 4"></path>` : svg`<path d="M5 2V15M2 12l3 3 3-3"></path>`}</svg>`;
  }

  private sideTab(name: string, i: number) {
    const cls = classMap({ "side-tab": true, "side-first": i === 0, "side-light": i === 1, "side-on": i === 3, "side-tall": i > 3 });
    const body = i === 1
      ? html`<svg class="skip" viewBox="0 0 14 12"><path d="M1 0l8 6-8 6zM10 0h3v12h-3z"></path></svg>应用`
      : i === 3 ? html`<span class="side-k">K</span> 线图` : name;
    return html`<button class=${cls}>${body}</button>`;
  }

  render() {
    const tabs = ["机构仓位筹码", "柱型KDJ", "投机趋势", "抄底买入", "主力盈利比例", "天天躺赢副图", "股林主升浪潜伏点"];
    const links = ["留言", "解盘", "股市日记", "股灵通", "行情", "7*24小时", "智能助手"];
    return html`
      <title-bar></title-bar>
      <main class="main">
        <nav class="side">${SIDE_TABS.map((t, i) => this.sideTab(t, i))}</nav>
        <section class="charts">
          <div class="legend">
            <span class="period">日线(复权)</span><span class="stock">中水渔业</span>
            ${AVERAGES.map(([n, v, tone, up]) => html`<span class="average ${tone}"><span>${n} ${v}</span></span>${this.arrow(up)}`)}
            <div class="actions">
              ${["加自选", "均线", "复权", "叠", "窗", "预测"].map((a) => html`<button class="action">${a}</button>`)}
              <button class="action" aria-label="最新"><svg class="end-icon" viewBox="0 0 18 18"><path d="M0 6h6V1l8 8-8 8v-5H0zM15 1h3v16h-3z"></path></svg></button>
              <button class="action" aria-label="更多"><svg class="more-icon" viewBox="0 0 14 18"><path d="M1 6h12l-6 7z"></path></svg></button>
            </div>
          </div>
          <candle-chart></candle-chart>
          <div class="legend2">
            <span class="red legend2-gap">股林主升浪潜伏点</span>
            <span class="item red">红绿: +0.089${this.arrow(true)}</span>
            <span class="item yellow">序: +0.131${this.arrow(true)}</span>
            <span class="item yellow">股林漫步: +0</span>
            <span class="item lime">建底仓: +0</span>
            <button class="explain">指标说明</button>
          </div>
          <indicator-chart></indicator-chart>
          <div class="tabs">
            <button class="plain-tab">设置</button><button class="plain-tab">指标平台</button>
            ${tabs.map((t, i) => html`<button class=${classMap({ tab: true, "tab-first": i === 0, "tab-on": i === 6 })}>${t}</button>`)}
          </div>
          <svg class="ring" viewBox="32 66 1736 1271" aria-hidden="true"><ellipse cx="544" cy="1014" rx="41" ry="303"></ellipse></svg>
        </section>
        <quote-panel></quote-panel>
      </main>
      <div class="indexes">${INDEXES.map(([name, values], i) => html`<div class=${classMap({ index: true, "index-wide": i === 3 })}>
        <span class="index-name">${name}</span>
        ${values.map((v, k) => k === 3 ? html`<span class="turnover">${v.slice(0, -1)}<span class="thin">亿</span></span>` : html`<span>${v}</span>`)}
      </div>`)}</div>
      <footer class="footer">
        ${links.map((l) => html`<button class="foot-link">${l}</button>`)}
        <div class="news"><div class="news-track"><span>或设备和植入设备</span><span>06:14 中央气象台8月29日06时继续发布暴雨蓝色预警</span></div></div>
        <input class="search" type="text" aria-label="代码搜索" placeholder="代码/名称/简拼/功能">
      </footer>
      <div class="taskbar"><div class="task"></div></div>
      <brand-stamp class="stamp-large"></brand-stamp>
      <brand-stamp class="stamp-small"></brand-stamp>
      <div class="credit"><span class="credit-cjk">股海网提供</span><span>Www.Guhai.Com.CN</span></div>
      <aside class="source">
        <div class="source-top"><span class="source-name">股海网</span><span class="source-tag">${[..."股票软件资源分享"].map((c) => html`<span class="source-char">${c}</span>`)}</span></div>
        <a class="source-url" href="#guhai">Www.Guhai.com.cn</a>
      </aside>`;
  }
}
